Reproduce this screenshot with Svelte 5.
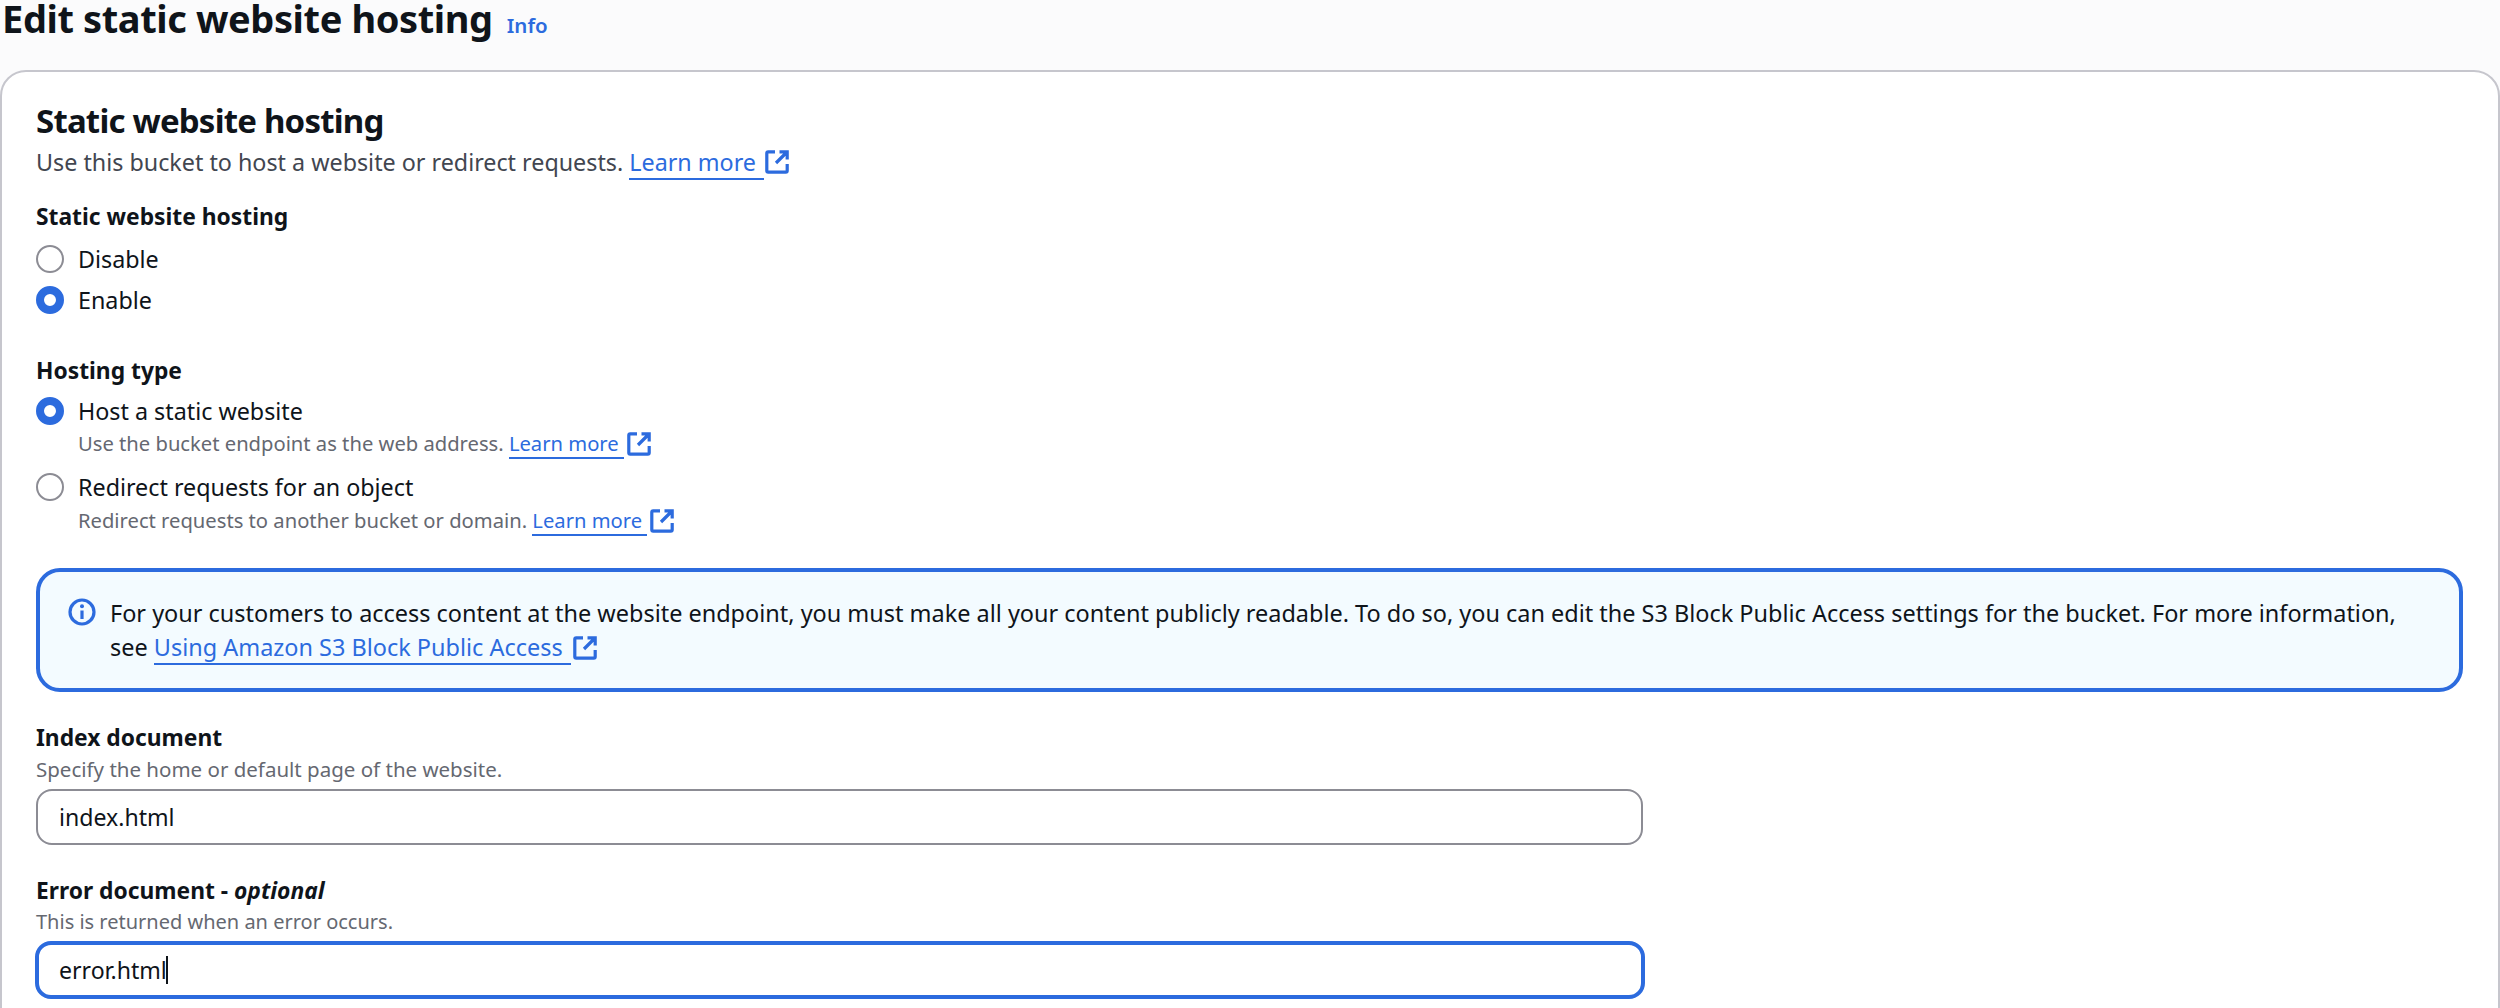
<script>
</script>

{#snippet extIcon(cls)}
  <svg class="ext {cls}" viewBox="0 0 24 24" fill="none" stroke="currentColor" stroke-width="3.2" aria-hidden="true">
    <path d="M10 1.8H3.2A1.4 1.4 0 0 0 1.8 3.2v17.6a1.4 1.4 0 0 0 1.4 1.4h17.6a1.4 1.4 0 0 0 1.4-1.4V14" />
    <path d="M14.5 1.8h7.7v7.7M22 2 11 13" />
  </svg>
{/snippet}

{#snippet learn(cls)}
  <a class="link {cls}" href="#top"><span class="lt">Learn more</span>{@render extIcon(cls)}</a>
{/snippet}

<div class="page">
  <header class="head">
    <h1>Edit static website hosting</h1>
    <span class="info">Info</span>
  </header>

  <section class="card">
    <h2>Static website hosting</h2>
    <p class="desc">Use this bucket to host a website or redirect requests. {@render learn('big')}</p>

    <div class="label first">Static website hosting</div>
    <div class="radios">
      <div class="radio"><span class="dot"></span><span>Disable</span></div>
      <div class="radio"><span class="dot on"></span><span>Enable</span></div>
    </div>

    <div class="label type">Hosting type</div>
    <div class="opt">
      <div class="radio"><span class="dot on"></span><span>Host a static website</span></div>
      <p class="sub">Use the bucket endpoint as the web address. {@render learn('small')}</p>
    </div>
    <div class="opt second">
      <div class="radio"><span class="dot"></span><span>Redirect requests for an object</span></div>
      <p class="sub">Redirect requests to another bucket or domain. {@render learn('small')}</p>
    </div>

    <div class="alert">
      <svg class="i" viewBox="0 0 28 28" fill="none" stroke="currentColor" aria-hidden="true">
        <circle cx="14" cy="14" r="12" stroke-width="3.2" />
        <path d="M14 12.5V21" stroke-width="3.2" />
        <circle cx="14" cy="8.2" r="2" fill="currentColor" stroke="none" />
      </svg>
      <p>For your customers to access content at the website endpoint, you must make all your content publicly readable. To do so, you can edit the S3 Block Public Access settings for the bucket. For more information,<br />see <a class="link" href="#top"><span class="lt">Using Amazon S3 Block Public Access</span>{@render extIcon('mid')}</a></p>
    </div>

    <div class="label idx">Index document</div>
    <p class="hint">Specify the home or default page of the website.</p>
    <div class="input">index.html</div>

    <div class="label err">Error document - <em>optional</em></div>
    <p class="hint short">This is returned when an error occurs.</p>
    <div class="input focus">error.html<span class="caret"></span></div>
  </section>
</div>

<style>
  :global(body) { margin: 0; background: #fbfbfc; overflow: hidden; }
  .page {
    height: 1008px; overflow: hidden; background: #fbfbfc; color: #0f141a;
    font-family: "Noto Sans", sans-serif; font-size: 23.3px;
  }
  .head { display: flex; align-items: baseline; height: 70px; padding-left: 2px; box-sizing: border-box; }
  h1 { margin: 0; font-size: 38px; line-height: 36px; font-weight: 700; letter-spacing: -0.4px; white-space: nowrap; }
  .info { margin-left: 14px; color: #2c6bde; font-size: 20.5px; font-weight: 600; line-height: 36px; }
  .card {
    background: #fff; border: 2px solid #c6c6cd; border-radius: 26px;
    padding: 29px 34px 0 34px; height: 1100px; box-sizing: border-box;
  }
  h2 { margin: 0; font-size: 33px; line-height: 40px; font-weight: 700; letter-spacing: -0.8px; }
  p { margin: 0; }
  .desc { color: #424650; line-height: 36px; margin-top: 3px; }
  .link { color: #2c6bde; text-decoration: none; }
  .lt { border-bottom: 2px solid #2c6bde; padding-right: 8px; }
  .ext { display: inline-block; width: 24px; height: 24px; margin-left: 1px; }
  .ext.big { vertical-align: -3px; }
  .ext.mid { vertical-align: -4px; margin-left: 2px; }
  .ext.small { vertical-align: -5px; margin-left: 3px; }
  .small .lt { padding-right: 5px; }
  .label { font-size: 22.8px; font-weight: 700; line-height: 30px; }
  .first { margin-top: 22px; }
  .radios { margin-top: 12px; display: flex; flex-direction: column; gap: 11px; }
  .radio { display: flex; align-items: center; gap: 14px; line-height: 30px; }
  .dot { width: 28px; height: 28px; border-radius: 50%; border: 2px solid #8c8c94; box-sizing: border-box; background: #fff; flex: none; }
  .dot.on { border: 8.5px solid #2c6bde; }
  .type { margin-top: 41px; }
  .opt { margin-top: 10px; }
  .opt.second { margin-top: 15px; }
  .sub { color: #656871; font-size: 20.2px; line-height: 28px; padding-left: 42px; margin-top: 3px; }
  .second .sub { margin-top: 4px; }
  .alert {
    margin-top: 34px; display: flex; gap: 14px; height: 124px; box-sizing: border-box;
    border: 4px solid #2c6bde; border-radius: 24px; background: #f3fbff;
    padding: 24px 28px; width: 2427px;
  }
  .i { width: 28px; height: 28px; color: #2c6bde; flex: none; margin-top: 2px; }
  .alert p { font-size: 23.46px; line-height: 34px; white-space: nowrap; }
  .idx { margin-top: 31px; }
  .err { margin-top: 31px; }
  .err em { font-weight: 700; }
  .hint { color: #656871; font-size: 20.5px; line-height: 28px; margin-top: 2px; }
  .hint.short { font-size: 20px; }
  .input {
    margin-top: 6px; width: 1607px; height: 56px; box-sizing: border-box; display: flex; align-items: center;
    border: 2px solid #8c8c94; border-radius: 16px; padding-left: 21px; font-size: 23.1px; background: #fff;
  }
  .input.focus { width: 1610px; height: 58px; margin-top: 5px; margin-left: -1px; border: 4px solid #2c6bde; padding-left: 20px; }
  .caret { width: 2px; height: 28px; background: #0f141a; margin-left: -1px; }
</style>
